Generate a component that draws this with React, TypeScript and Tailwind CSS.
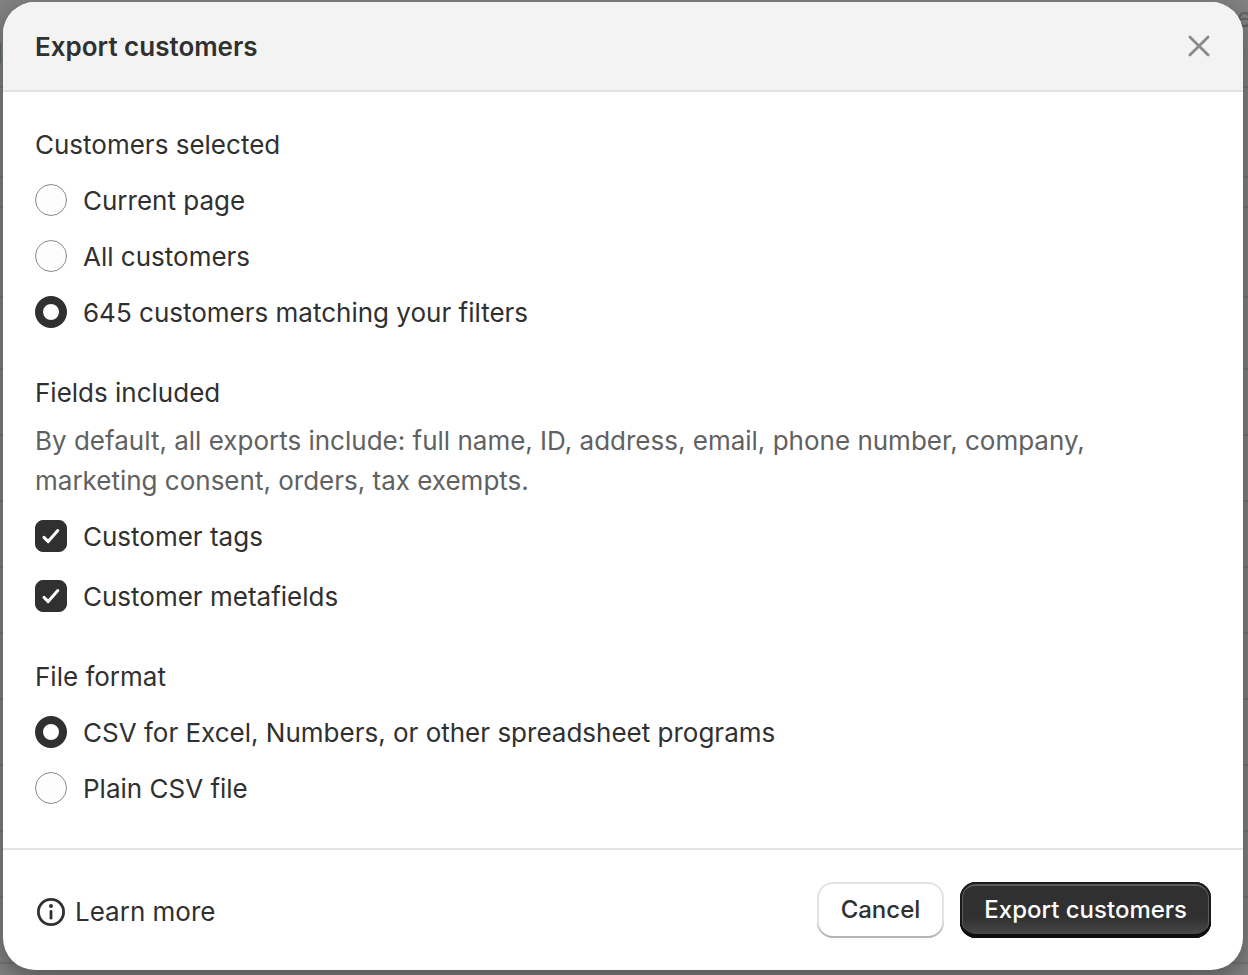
import { useState, type ReactNode } from "react";

const backdropRows = [
  "h-[88px]", "h-[90px]", "h-[30px]", "h-[90px]", "h-[72px]", "h-[66px]", "h-[66px]",
  "h-[66px]", "h-[66px]", "h-[66px]", "h-[66px]", "h-[66px]", "h-[66px]", "h-[66px]",
];

function Backdrop() {
  return (
    <div aria-hidden="true" className="absolute inset-0 -z-10 overflow-hidden bg-[#828282]">
      {backdropRows.map((height, i) => (
        <div key={i} className={`${height} border-b-2 border-[#757575]`} />
      ))}
      <span className="absolute top-[43px] left-0 h-5 w-px bg-[#5c6b68]" />
      <span className="absolute top-0.5 -right-1 leading-8 text-[#636363]">e</span>
    </div>
  );
}

type OptionProps = {
  type: "radio" | "checkbox";
  name: string;
  label: string;
  checked: boolean;
  onChange: () => void;
};

function Option({ type, name, label, checked, onChange }: OptionProps) {
  const shape =
    type === "radio"
      ? "rounded-full border border-[#8a8a8a] bg-[#fdfdfd] checked:border-8 checked:border-[#303030]"
      : "rounded-lg border border-[#8a8a8a] bg-[#fdfdfd] checked:border-[#303030] checked:bg-[#303030]";
  return (
    <label className="flex w-fit cursor-pointer items-start gap-4">
      <span className="mt-[3px] grid size-8 shrink-0 place-items-center">
        <input
          type={type}
          name={name}
          checked={checked}
          onChange={onChange}
          className={`col-start-1 row-start-1 size-8 appearance-none ${shape}`}
        />
        {type === "checkbox" && checked && (
          <svg viewBox="0 0 32 32" className="pointer-events-none col-start-1 row-start-1 size-8" fill="none" stroke="#fff" strokeWidth="3" strokeLinecap="round" strokeLinejoin="round">
            <path d="M9 17.4 13.2 21.6 22.8 10.6" />
          </svg>
        )}
      </span>
      <span>{label}</span>
    </label>
  );
}

function Group({ title, children }: { title: string; children: ReactNode }) {
  return (
    <fieldset>
      <legend>{title}</legend>
      {children}
    </fieldset>
  );
}

export default function App() {
  const [scope, setScope] = useState("filters");
  const [tags, setTags] = useState(true);
  const [metafields, setMetafields] = useState(true);
  const [format, setFormat] = useState("excel");

  return (
    <div className="relative isolate min-h-screen overflow-hidden pt-0.5 pr-[5px] pb-[5px] pl-[3px] font-['Inter',sans-serif] text-[26px] leading-10 text-[#303030] antialiased [font-optical-sizing:none]">
      <Backdrop />
      <div role="dialog" aria-labelledby="dialog-title" className="overflow-hidden rounded-[32px] bg-white shadow-[0_8px_24px_rgba(0,0,0,0.36)]">
        <header className="flex items-center justify-between border-b-2 border-[#e3e3e3] bg-[#f3f3f3] px-8 py-6">
          <h1 id="dialog-title" className="pt-0.5 text-[26px] leading-[38px] font-semibold">Export customers</h1>
          <button type="button" aria-label="Close" className="grid size-6 place-items-center text-[#8a8a8a]">
            <svg viewBox="0 0 24 24" className="size-6" fill="none" stroke="currentColor" strokeWidth="2.8" strokeLinecap="round">
              <path d="M2.9 2.9 21.1 21.1M21.1 2.9 2.9 21.1" />
            </svg>
          </button>
        </header>

        <div className="flex flex-col gap-10 px-8 pt-[33px] pb-[39px]">
          <Group title="Customers selected">
            <div className="mt-4 flex flex-col gap-4">
              <Option type="radio" name="scope" label="Current page" checked={scope === "page"} onChange={() => setScope("page")} />
              <Option type="radio" name="scope" label="All customers" checked={scope === "all"} onChange={() => setScope("all")} />
              <Option type="radio" name="scope" label="645 customers matching your filters" checked={scope === "filters"} onChange={() => setScope("filters")} />
            </div>
          </Group>

          <Group title="Fields included">
            <p className="mt-2 max-w-[1100px] text-[#616161]">
              By default, all exports include: full name, ID, address, email, phone number, company, marketing consent, orders, tax exempts.
            </p>
            <div className="mt-4 flex flex-col gap-5">
              <Option type="checkbox" name="tags" label="Customer tags" checked={tags} onChange={() => setTags(!tags)} />
              <Option type="checkbox" name="metafields" label="Customer metafields" checked={metafields} onChange={() => setMetafields(!metafields)} />
            </div>
          </Group>

          <Group title="File format">
            <div className="mt-4 flex flex-col gap-4">
              <Option type="radio" name="format" label="CSV for Excel, Numbers, or other spreadsheet programs" checked={format === "excel"} onChange={() => setFormat("excel")} />
              <Option type="radio" name="format" label="Plain CSV file" checked={format === "plain"} onChange={() => setFormat("plain")} />
            </div>
          </Group>
        </div>

        <footer className="flex items-center justify-between border-t-2 border-[#e3e3e3] p-8">
          <a href="#learn-more" className="flex items-center gap-2 pt-1">
            <svg viewBox="0 0 32 32" className="size-8" fill="none" stroke="currentColor" strokeWidth="2.8" strokeLinecap="round">
              <circle cx="16" cy="16" r="12.6" />
              <path d="M16 15.4v6.8" />
              <circle cx="16" cy="10" r="2" fill="currentColor" stroke="none" />
            </svg>
            Learn more
          </a>
          <div className="flex gap-4 text-[24px] leading-8 font-medium">
            <button type="button" className="h-14 rounded-2xl bg-white px-6 shadow-[inset_0_-2px_0_#b5b5b5,inset_0_0_0_2px_#e3e3e3]">
              Cancel
            </button>
            <button type="button" className="h-14 rounded-2xl bg-[linear-gradient(180deg,#303030_63%,#4d4d4d_100%)] px-6 text-white shadow-[inset_0_-4px_0_#0d0d0d,inset_0_0_0_2px_#1a1a1a,inset_0_4px_0_#5c5c5c,inset_0_0_0_3px_#5c5c5c]">
              Export customers
            </button>
          </div>
        </footer>
      </div>
    </div>
  );
}
